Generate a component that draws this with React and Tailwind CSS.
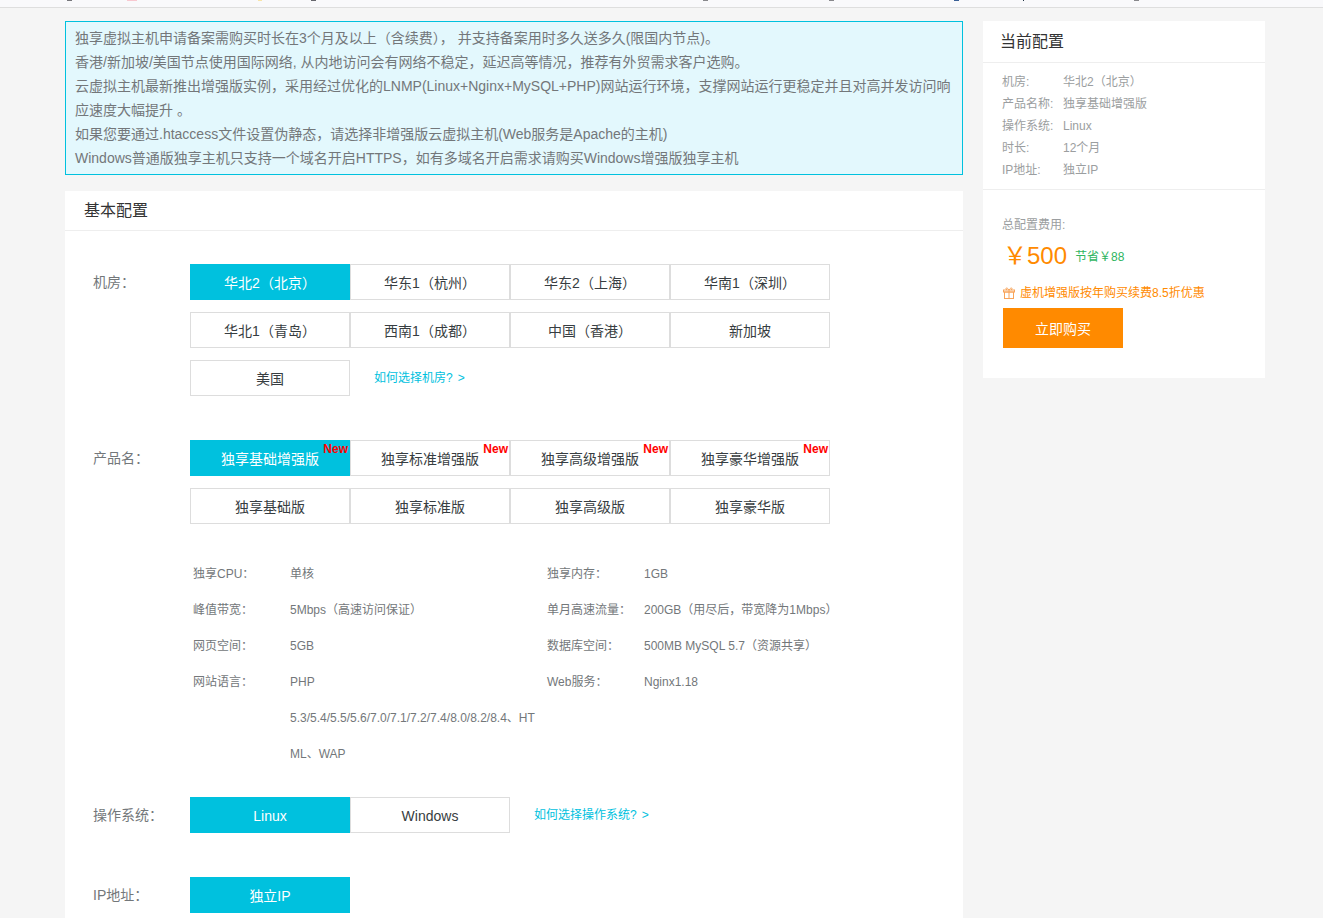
import React from 'react';

const font = 'font-["Liberation_Sans","Noto_Sans_CJK_SC",sans-serif]';

const rooms = ['华北2（北京）', '华东1（杭州）', '华东2（上海）', '华南1（深圳）', '华北1（青岛）', '西南1（成都）', '中国（香港）', '新加坡', '美国'];
const products = ['独享基础增强版', '独享标准增强版', '独享高级增强版', '独享豪华增强版', '独享基础版', '独享标准版', '独享高级版', '独享豪华版'];

const notices = [
  '独享虚拟主机申请备案需购买时长在3个月及以上（含续费）， 并支持备案用时多久送多久(限国内节点)。',
  '香港/新加坡/美国节点使用国际网络, 从内地访问会有网络不稳定，延迟高等情况，推荐有外贸需求客户选购。',
  '云虚拟主机最新推出增强版实例，采用经过优化的LNMP(Linux+Nginx+MySQL+PHP)网站运行环境，支撑网站运行更稳定并且对高并发访问响应速度大幅提升 。',
  '如果您要通过.htaccess文件设置伪静态，请选择非增强版云虚拟主机(Web服务是Apache的主机)',
  'Windows普通版独享主机只支持一个域名开启HTTPS，如有多域名开启需求请购买Windows增强版独享主机',
];

const specs = [
  ['独享CPU：', '单核', '独享内存：', '1GB'],
  ['峰值带宽：', '5Mbps（高速访问保证）', '单月高速流量：', '200GB（用尽后，带宽降为1Mbps）'],
  ['网页空间：', '5GB', '数据库空间：', '500MB MySQL 5.7（资源共享）'],
  [
    '网站语言：',
    <>
      PHP
      <br />
      5.3/5.4/5.5/5.6/7.0/7.1/7.2/7.4/8.0/8.2/8.4、HTML、WAP
    </>,
    'Web服务：',
    'Nginx1.18',
  ],
];

const summary = [
  ['机房:', '华北2（北京）'],
  ['产品名称:', '独享基础增强版'],
  ['操作系统:', 'Linux'],
  ['时长:', '12个月'],
  ['IP地址:', '独立IP'],
];

const Option = ({ label, active, isNew }) => (
  <div
    className={`relative flex h-9 w-40 items-center justify-center border pt-0.5 text-sm ${
      active ? 'border-[#00c1de] bg-[#00c1de] text-white' : 'border-[#dddddd] bg-white text-[#373d41]'
    }`}
  >
    {label}
    {isNew && (
      <span className="absolute right-px top-0 text-xs leading-4 font-bold text-[#ff0000]">New</span>
    )}
  </div>
);

const Row = ({ label, children, className = '' }) => (
  <div className={`flex ${className}`}>
    <div className="w-[97px] shrink-0 pt-2 text-sm leading-5 text-[#73777a]">{label}</div>
    <div className="flex-1">{children}</div>
  </div>
);

const Link = ({ children }) => (
  <span className="ml-6 flex h-9 items-center text-xs text-[#00c1de]">
    <span>{children}?</span>
    <span className="ml-[5px]">&gt;</span>
  </span>
);

const Spec = ({ label, value, valueWidth }) => (
  <div className="flex">
    <div className="w-[97px] shrink-0 text-[#73777a]">{label}</div>
    <div className={`break-all text-[#73777a] ${valueWidth}`}>{value}</div>
  </div>
);

const GiftIcon = () => (
  <svg width="12" height="12" viewBox="0 0 12 12" fill="none" stroke="#f8a45a" strokeWidth="1">
    <rect x="1.500" y="5" width="9" height="6.500" />
    <rect x="0.500" y="3" width="11" height="2" />
    <path d="M6 3v8.500M6 3C4.500 0.500 2.500 0.500 3 2.200L4 3M6 3c1.500-2.500 3.500-2.500 3-0.800L8 3" />
  </svg>
);

export default function App() {
  return (
    <div className={`h-[918px] overflow-hidden bg-[#f5f5f5] ${font}`}>
      {/* clipped header: only the bottoms of its items show */}
      <div className="relative h-2 border-b border-[#dedede] bg-[#f9f9fb]">
        <span className="absolute top-0 left-[67px] h-px w-[5px] bg-[#77777c]" />
        <span className="absolute top-0 left-[127px] h-px w-[10px] bg-[#f8c8d0]" />
        <span className="absolute top-0 left-[258px] h-px w-1 bg-[#f8e4a8]" />
        <span className="absolute top-0 left-[311px] h-px w-[5px] bg-[#66666c]" />
        <span className="absolute top-0 left-[703px] h-px w-[5px] bg-[#88888c]" />
        <span className="absolute top-0 left-[829px] h-px w-[5px] bg-[#88888c]" />
        <span className="absolute top-0 left-[954px] h-px w-[5px] bg-[#3a5f96]" />
        <span className="absolute top-0 left-[1023px] h-px w-px bg-[#223344]" />
        <span className="absolute top-0 left-[1134px] h-px w-[5px] bg-[#88888c]" />
      </div>

      <div className="mt-[13px] flex gap-5 pl-[65px]">
        <main className="w-[898px] shrink-0">
          <div className="border border-[#00c1de] bg-[#e3f8fd] pt-1 pr-2.5 pb-1 pl-[9px] text-sm leading-6 text-[#73777a]">
            {notices.map((line) => (
              <p key={line}>{line}</p>
            ))}
          </div>

          <section className="mt-4 bg-white pb-10">
            <h2 className="flex h-10 items-center border-b border-[#eeeeee] pl-[19px] text-base font-normal text-[#333333]">
              基本配置
            </h2>

            <div className="px-7 pt-[33px]">
              <Row label="机房：">
                <div className="grid w-[640px] grid-cols-4 gap-y-3">
                  {rooms.map((room, i) => (
                    <Option key={room} label={room} active={i === 0} />
                  ))}
                  <div className="col-span-3 flex">
                    <Link>如何选择机房</Link>
                  </div>
                </div>
              </Row>

              <Row label="产品名：" className="mt-11">
                <div className="grid w-[640px] grid-cols-4 gap-y-3">
                  {products.map((name, i) => (
                    <Option key={name} label={name} active={i === 0} isNew={i < 4} />
                  ))}
                </div>
              </Row>

              <div className="mt-8 ml-[100px] grid w-[660px] grid-cols-[354px_1fr] text-xs leading-9">
                {specs.map(([a, b, c, d]) => (
                  <React.Fragment key={a}>
                    <Spec label={a} value={b} valueWidth="w-[245px]" />
                    <Spec label={c} value={d} valueWidth="w-[210px] whitespace-nowrap" />
                  </React.Fragment>
                ))}
              </div>

              <Row label="操作系统：" className="mt-[25px]">
                <div className="flex">
                  <Option label="Linux" active />
                  <Option label="Windows" />
                  <Link>如何选择操作系统</Link>
                </div>
              </Row>

              <Row label="IP地址：" className="mt-11">
                <Option label="独立IP" active />
              </Row>
            </div>
          </section>
        </main>

        <aside className="h-[357px] w-[282px] shrink-0 bg-white">
          <h2 className="flex h-[42px] items-center border-b border-[#eeeeee] pl-[17px] text-base font-normal text-[#333333]">
            当前配置
          </h2>
          <div className="border-b border-[#eeeeee] pt-2 pr-5 pb-2 pl-[19px] text-xs leading-[22px] text-[#9b9ea0]">
            {summary.map(([k, v]) => (
              <div key={k} className="flex">
                <span className="w-[61px] shrink-0">{k}</span>
                <span>{v}</span>
              </div>
            ))}
          </div>
          <div className="px-5 pt-[26px]">
            <div className="-ml-px text-xs leading-[18px] text-[#9b9ea0]">总配置费用:</div>
            <div className="mt-1 flex h-9 items-center">
              <span className="text-2xl text-[#ff8a00]">￥500</span>
              <span className="mt-0.5 ml-2 text-xs text-[#2fb55f]">节省￥88</span>
            </div>
            <div className="mt-2.5 flex h-[18px] items-center gap-[5px] text-xs text-[#ff8a00]">
              <GiftIcon />
              虚机增强版按年购买续费8.5折优惠
            </div>
            <button className="mt-1.5 h-10 w-[120px] bg-[#ff8a00] pt-0.5 text-sm text-white">立即购买</button>
          </div>
        </aside>
      </div>
    </div>
  );
}
